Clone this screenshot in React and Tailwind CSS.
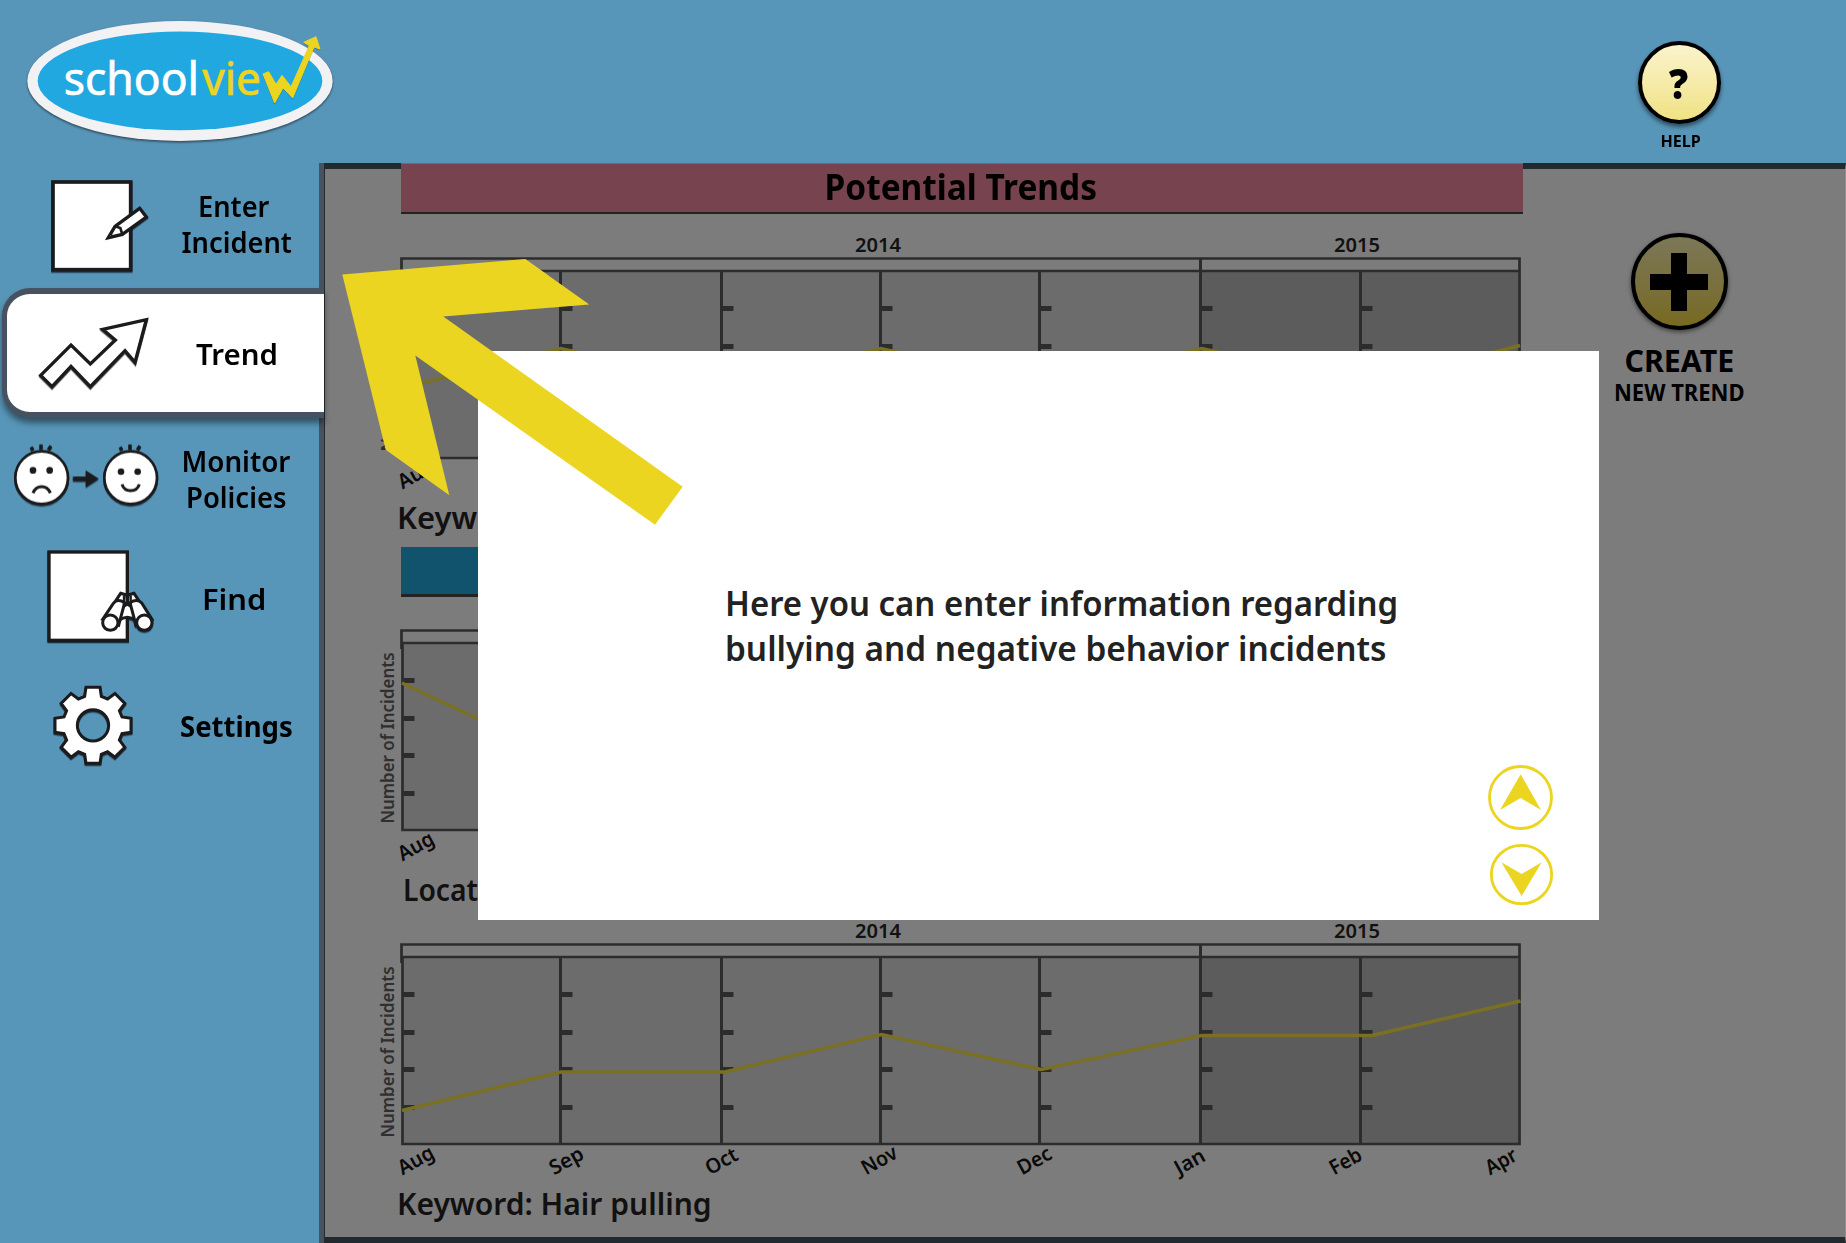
import { useLayoutEffect, useRef, useState } from "react";

// Condenses or widens a single line of text to a given width.
function Fit({ w, align = "center", className = "", children }) {
  const ref = useRef(null);
  const [scale, setScale] = useState(1);
  useLayoutEffect(() => {
    setScale(w / ref.current.offsetWidth);
  }, [w]);
  return (
    <div className={`flex whitespace-nowrap ${align === "center" ? "justify-center" : "justify-start"} ${className}`}>
      <span
        ref={ref}
        className={align === "center" ? "block origin-center" : "block origin-left"}
        style={{ transform: `scaleX(${scale})` }}
      >
        {children}
      </span>
    </div>
  );
}

function Logo() {
  return (
    <svg className="block" width="400" height="163" viewBox="0 0 1200 489">
      <g style={{ filter: "drop-shadow(0 4px 3px rgba(0,0,0,.55))" }}>
        <ellipse cx="540" cy="243" rx="458" ry="180" fill="#f2f2f4" />
      </g>
      <ellipse cx="540" cy="242.500" rx="427" ry="148" fill="#22a8e1" />
      <g fontFamily="Noto Sans, sans-serif" fontSize="138" strokeWidth="2">
        <text x="191" y="286" fill="#fff" stroke="#fff" textLength="406" lengthAdjust="spacingAndGlyphs">school</text>
        <text x="607" y="286" fill="#ecd521" stroke="#ecd521" textLength="176" lengthAdjust="spacingAndGlyphs">vie</text>
      </g>
      <path
        d="M789 222L806 215L828 253L846 226L873 260L928 137L911 127L948 110L960 147L942 141L878 294L849 264L824 309Z"
        fill="#ecd521"
        stroke="#ecd521"
        strokeWidth="3"
        style={{ filter: "drop-shadow(0 2px 1px rgba(0,0,0,.3))" }}
      />
    </svg>
  );
}

const SHADOW = { filter: "drop-shadow(0 4px 2px rgba(0,0,0,.65))" };

function EnterIcon() {
  return (
    <svg width="165" height="125" viewBox="0 489 495 375" className="block shrink-0">
      <g stroke="#1b1a1c" fill="#fff" strokeWidth="11" style={SHADOW}>
        <rect x="159" y="546" width="233" height="263" />
        <path d="M325 713L345 679L419 625L439 651L367 703Z" strokeWidth="10" />
        <path d="M345 679L361 684L367 703" fill="none" strokeWidth="8" />
        <path d="M325 713L331 702L339 709Z" strokeWidth="5" />
      </g>
    </svg>
  );
}

function TrendIcon() {
  return (
    <svg width="158" height="118" viewBox="21 72 474 354" className="block shrink-0">
      <path
        d="M122 316L213 225L271 282L346 210L308 178L439 149L405 277L375 242L271 350L213 289L156 350Z"
        fill="#fff"
        stroke="#1b1a1c"
        strokeWidth="10"
        style={SHADOW}
      />
    </svg>
  );
}

function Face({ cx, happy }) {
  return (
    <g transform={`translate(${cx} 0)`}>
      <circle cx="0" cy="623" r="79" fill="#fff" strokeWidth="8" />
      <path d="M-32 531L-26 540M-2 523L-2 538M28 528L20 539" strokeWidth="10" fill="none" />
      <circle cx={happy ? -29 : -26} cy={happy ? 605 : 601} r="10" fill="#1b1a1c" stroke="none" />
      <circle cx={happy ? 21 : 24} cy={happy ? 605 : 601} r="10" fill="#1b1a1c" stroke="none" />
      <path d={happy ? "M-26 643Q-20 662 0 662Q20 662 26 643" : "M-26 669Q-18 650 0 650Q18 650 26 669"} fill="none" strokeWidth="9" />
    </g>
  );
}

function FacesIcon() {
  return (
    <svg width="165" height="117" viewBox="0 444 495 351" className="block shrink-0">
      <g stroke="#1b1a1c" style={SHADOW}>
        <Face cx={125} />
        <Face cx={392} happy />
        <path d="M219 626H260" strokeWidth="13" />
        <path d="M257 601L296 626L257 651Z" fill="#1b1a1c" stroke="none" />
      </g>
    </svg>
  );
}

function FindIcon() {
  return (
    <svg width="165" height="130" viewBox="0 15 495 390" className="block shrink-0">
      <g stroke="#1b1a1c" fill="#fff" strokeWidth="10" style={SHADOW}>
        <rect x="147" y="66" width="235" height="265" />
        <g strokeWidth="9">
          <path d="M356 272Q382 252 408 272L396 228L390 222H374L367 228Z" />
          <path d="M348 211L362 190L380 195L382 222L367 232Z" />
          <path d="M416 211L402 190L384 195L382 222L397 232Z" />
          <path d="M308 268L340 220Q352 204 374 218L356 286Z" />
          <path d="M456 268L426 220Q412 204 390 218L408 286Z" />
          <path d="M372 196V226M392 196V226" strokeWidth="7" />
          <circle cx="331" cy="278" r="23" />
          <circle cx="433" cy="278" r="23" />
        </g>
      </g>
    </svg>
  );
}

function gearPath() {
  const tooth = [[-25, -87], [-21, -114], [21, -114], [25, -87]];
  const pts = [];
  for (let i = 0; i < 8; i++) {
    const a = (i * Math.PI) / 4;
    tooth.forEach(([x, y]) =>
      pts.push(`${(279 + x * Math.cos(a) - y * Math.sin(a)).toFixed(1)} ${(586 + x * Math.sin(a) + y * Math.cos(a)).toFixed(1)}`)
    );
  }
  return `M${pts.join("L")}ZM326 586A47 47 0 1 0 232 586A47 47 0 1 0 326 586Z`;
}

function GearIcon() {
  return (
    <svg width="165" height="120" viewBox="0 405 495 360" className="block shrink-0">
      <path d={gearPath()} fill="#fff" fillRule="evenodd" stroke="#1b1a1c" strokeWidth="9" style={SHADOW} />
    </svg>
  );
}

const COLS = [402.5, 560.5, 721.5, 880.5, 1039.5, 1200.5, 1360.5, 1519.5];
const MONTHS = [
  ["Aug", 402.5, 38],
  ["Sep", 554, 36],
  ["Oct", 710, 34],
  ["Nov", 866, 38],
  ["Dec", 1022, 36],
  ["Jan", 1179, 32],
  ["Feb", 1334, 34],
  ["Apr", 1490, 33],
];

// All three charts share one frame, drawn between y = 943 and y = 1145.
function Chart({ points, years = true, months = 8, className }) {
  return (
    <svg
      width="1166"
      height="260"
      viewBox="376 920 1166 260"
      className={`-ml-[25px] block shrink-0 overflow-visible ${className}`}
      fontFamily="Noto Sans, sans-serif"
    >
      <rect x="402" y="957" width="798" height="187" fill="#6c6c6c" />
      <rect x="1200" y="957" width="320" height="187" fill="#5c5c5c" />
      <g stroke="#2c2c2c" fill="none">
        <path d="M401.500 963V944.500H1519.500V1144H402.500V957H1519.500" strokeWidth="2.700" />
        <path d="M1200.500 944V957" strokeWidth="3" />
        {COLS.slice(1, 7).map((x) => (
          <path key={x} d={`M${x} 957V1144`} strokeWidth="3" />
        ))}
        {COLS.slice(0, 7).map((x) =>
          [994.5, 1032.5, 1069.5, 1107.5].map((y) => <path key={`${x}-${y}`} d={`M${x} ${y}h12`} strokeWidth="5" />)
        )}
      </g>
      <polyline points={points} fill="none" stroke="#7a7024" strokeWidth="3.500" />
      {years && (
        <g fill="#111" fontSize="19.500" fontWeight="600">
          <text x="855" y="938" textLength="46" lengthAdjust="spacingAndGlyphs">2014</text>
          <text x="1334" y="938" textLength="46" lengthAdjust="spacingAndGlyphs">2015</text>
        </g>
      )}
      <text transform="translate(393.500 1137.500) rotate(-90)" fill="#2f2f2f" fontSize="18.500" fontWeight="600" textLength="171" lengthAdjust="spacingAndGlyphs">
        Number of Incidents
      </text>
      {MONTHS.slice(0, months).map(([m, x, w]) => (
        <text key={m} transform={`translate(${x} 1175.500) rotate(-29)`} fill="#0a0a0a" fontSize="20.500" fontWeight="600" textLength={w} lengthAdjust="spacingAndGlyphs">
          {m}
        </text>
      ))}
    </svg>
  );
}

function NavLabel({ lines, bold = false, className = "" }) {
  return (
    <div className={`w-[142px] text-[28px] leading-[36px] text-black ${bold ? "font-bold" : "font-semibold"} ${className}`}>
      {lines.map(([t, w, shift = ""]) => (
        <Fit key={t} w={w} className={shift}>{t}</Fit>
      ))}
    </div>
  );
}

function Sidebar() {
  return (
    <nav className="flex w-[324px] shrink-0 flex-col border-r-[5px] border-[#46525f]">
      <div className="flex h-[125px]">
        <EnterIcon />
        <NavLabel lines={[["Enter", 71, "-ml-[5px]"], ["Incident", 110, "ml-[2px]"]]} className="pt-[25px]" />
      </div>
      <div className="relative -mr-[5px] ml-[2px] flex h-[130px] rounded-l-[28px] border-y-[6px] border-l-[5px] border-[#46525f] bg-white shadow-[0_5px_6px_rgba(0,0,0,0.45)]">
        <TrendIcon />
        <NavLabel lines={[["Trend", 82, "ml-[2px]"]]} className="pt-[42px]" />
      </div>
      <div className="flex h-[117px]">
        <FacesIcon />
        <NavLabel lines={[["Monitor", 109], ["Policies", 101]]} className="pt-[25px]" />
      </div>
      <div className="flex h-[130px]">
        <FindIcon />
        <NavLabel lines={[["Find", 64, "-ml-[4px]"]]} className="pt-[46px]" />
      </div>
      <div className="flex h-[120px]">
        <GearIcon />
        <NavLabel lines={[["Settings", 113]]} bold className="pt-[43px]" />
      </div>
    </nav>
  );
}

function Caption({ children, w, className = "" }) {
  return (
    <Fit w={w} align="start" className={`h-9 shrink-0 text-[30.500px] leading-[36px] font-semibold text-[#111] ${className}`}>
      {children}
    </Fit>
  );
}

function Modal() {
  return (
    <section className="absolute top-[351px] left-[478px] flex h-[569px] w-[1121px] items-start bg-white">
      <div className="mt-[230px] ml-[247px] w-[680px] text-[34px] leading-[45px] font-semibold text-[#222]">
        <Fit w={673} align="start">Here you can enter information regarding</Fit>
        <Fit w={662} align="start">bullying and negative behavior incidents</Fit>
      </div>
      <div className="mt-[412px] ml-[80px] flex flex-col">
        <button className="block">
          <svg width="72" height="75" viewBox="75 69 216 225" className="block">
            <circle cx="181.500" cy="172.500" r="93" fill="none" stroke="#ecd521" strokeWidth="8.500" />
            <path d="M182 103L243 210L182 174L120 210Z" fill="#ecd521" />
          </svg>
        </button>
        <button className="block">
          <svg width="72" height="75" viewBox="75 294 216 225" className="block">
            <ellipse cx="184.500" cy="403.500" rx="90.500" ry="87.500" fill="none" stroke="#ecd521" strokeWidth="8.500" />
            <path d="M185 468L245 367L185 402L124 367Z" fill="#ecd521" />
          </svg>
        </button>
      </div>
    </section>
  );
}

export default function App() {
  return (
    <div className="relative flex h-[1243px] w-[1846px] flex-col overflow-hidden bg-[#5896b9] font-['Noto_Sans',sans-serif]">
      <header className="flex h-[163px] shrink-0 justify-between">
        <Logo />
        <div className="mr-[87px] flex w-[160px] flex-col items-center pt-[41px]">
          <button className="flex size-[83px] items-center justify-center rounded-full border-4 border-black bg-linear-to-b from-[#fbf3cc] to-[#f0e283] shadow-[0_3px_4px_rgba(0,0,0,0.5)]">
            <Fit w={19} className="text-[42px] leading-none font-black text-black">?</Fit>
          </button>
          <Fit w={40} className="mt-[6px] ml-[3px] text-[16.500px] leading-[22px] font-bold text-black">HELP</Fit>
        </div>
      </header>

      <div className="flex min-h-0 flex-1">
        <Sidebar />
        <main className="flex flex-1 border-y-[6px] border-r border-l border-y-[#232a2f] border-r-[#8f8f8f] border-l-[#252b31] bg-[#7c7c7c]">
          <div className="-mt-[6px] ml-[76px] flex w-[1122px] flex-col">
            <h1 className="h-[50.500px] shrink-0 border-t border-b-[2.500px] border-t-[#995866] border-b-[#232323] bg-[#77434f] text-[36px] leading-[46px] font-bold text-black">
              <Fit w={272} className="-ml-[3px]">Potential Trends</Fit>
            </h1>
            <Chart className="mt-[20px]" months={1} points="402,1074 561,1034.500 721,1072 881,1034.500 1041,1072 1202,1034.500 1361,1072 1480,1042 1520,1031.500" />
            <Caption w={140} className="mt-[5px] -ml-[4px]">Keyword:</Caption>
            <div className="mt-[12px] h-[50px] shrink-0 border-b-[3px] border-[#232323] bg-[#11526c]" />
            <Chart className="mt-[9px]" years={false} months={1} points="402,997 561,1072 721,1034 881,1072 1041,1034 1202,1072 1361,1034 1520,1072" />
            <Caption w={126} className="mt-[5px] ml-[2px]">Location:</Caption>
            <Chart className="mt-[13px]" points="402,1110.500 561,1072 725,1072 881.500,1034.500 1041,1069.500 1202,1035.500 1372,1035.500 1520.500,1001" />
            <Caption w={315} className="mt-[5px] -ml-[4px]">Keyword: Hair pulling</Caption>
          </div>
          <aside className="ml-[76px] flex w-[160px] flex-col items-center pt-[64px] text-black">
            <button className="flex size-[97px] items-center justify-center rounded-full border-4 border-black bg-linear-to-b from-[#7c7757] to-[#776a20] shadow-[0_2px_4px_rgba(0,0,0,0.5)]">
              <svg width="58" height="58" viewBox="0 0 58 58">
                <path d="M21 0H37V21H58V37H37V58H21V37H0V21H21Z" fill="#000" />
              </svg>
            </button>
            <Fit w={110} className="mt-[12px] text-[29.500px] leading-[38px] font-bold">CREATE</Fit>
            <Fit w={131} className="mt-[-3px] text-[24px] leading-[30px] font-bold">NEW TREND</Fit>
          </aside>
        </main>
      </div>

      <Modal />

      <svg className="pointer-events-none absolute top-[259px] left-[342px]" width="342" height="267" viewBox="342 259 342 267">
        <path
          d="M342.300 274.500L525.300 259L589.300 304.500L443.300 316.500L682.700 486.700L655 524.700L415.300 355.500L449.300 495.300L385.700 449.700Z"
          fill="#ecd521"
        />
      </svg>
    </div>
  );
}
